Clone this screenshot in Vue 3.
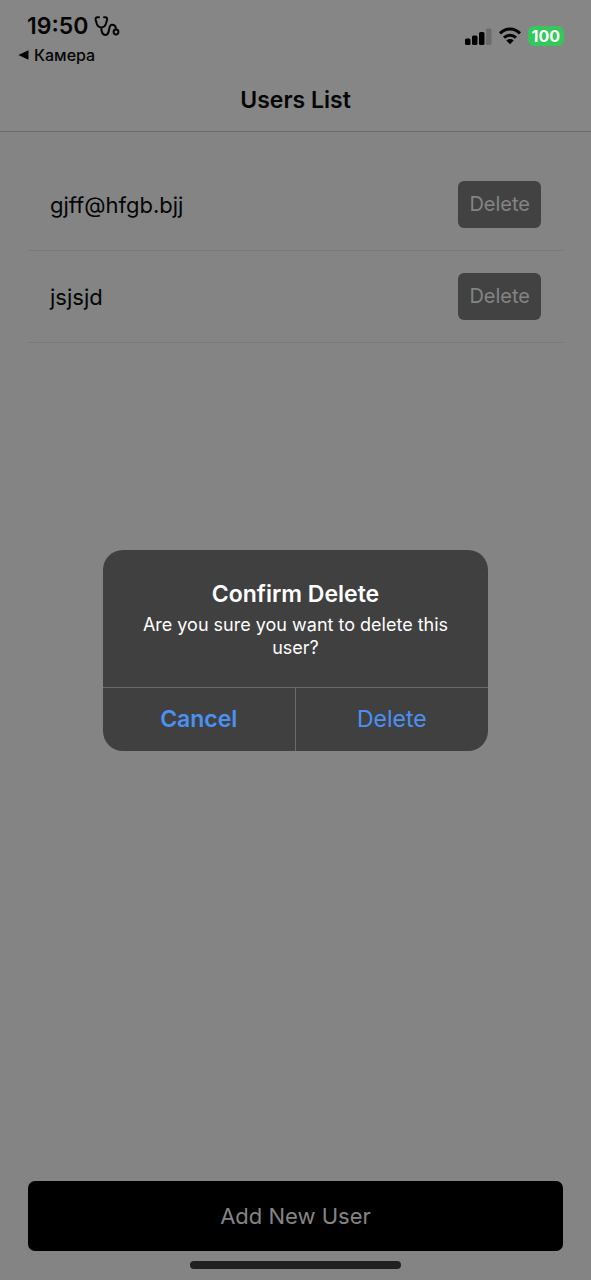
<script setup>
import { ref } from 'vue'

const users = ref(['gjff@hfgb.bjj', 'jsjsjd'])
const pending = ref(0)

function confirmDelete() {
  users.value.splice(pending.value, 1)
  pending.value = null
}
</script>

<template>
  <div class="screen">
    <div class="status">
      <div class="status-left">
        <div class="clock">
          <span class="time">19:50</span>
          <svg class="stethoscope" width="26" height="22" viewBox="0 0 26 22" aria-hidden="true">
            <path d="M5 2.200H3.600C2 2.200 1.300 3.200 1.700 4.900L2.800 8.800c.8 2.400 2.300 3.700 4.500 3.700s3.800-1.300 4.600-3.700L13 4.900C13.400 3.200 12.700 2.200 11.200 2.200H10M7.300 12.500C7.300 17.500 8.900 20 11.400 20C17 20 13.300 9.700 18 9.700c3 0 4 1.900 4 4.800" />
            <circle cx="22" cy="17" r="2.400" />
          </svg>
        </div>
        <a class="back" href="#">
          <svg width="11" height="10" viewBox="0 0 11 10" aria-hidden="true"><path d="M10.500.3v9.400L.4 5z" /></svg>
          Камера
        </a>
      </div>
      <div class="status-right">
        <svg width="27" height="17" viewBox="0 0 27 17" aria-hidden="true">
          <rect x="0" y="10.500" width="5.500" height="6.500" rx="1.500" />
          <rect x="7" y="7.500" width="5.500" height="9.500" rx="1.500" />
          <rect x="14" y="4" width="5.500" height="13" rx="1.500" />
          <rect class="faint" x="21" y="0.500" width="5.500" height="16.500" rx="1.500" />
        </svg>
        <svg class="wifi" width="24" height="18" viewBox="0 0 24 18" aria-hidden="true">
          <path d="M2 6.400C7.800.6 16.200.6 22 6.400M6 10.700c3.500-3.300 8.500-3.300 12 0" />
          <path class="dot" d="M8.300 13.400c2.200-1.900 5.200-1.900 7.400 0L12 17.200z" />
        </svg>
        <span class="battery">100</span>
      </div>
    </div>

    <header class="header"><h1>Users List</h1></header>

    <ul class="users">
      <li v-for="(user, i) in users" :key="user">
        <span>{{ user }}</span>
        <button type="button" class="remove" @click="pending = i">Delete</button>
      </li>
    </ul>

    <footer class="footer">
      <button type="button" class="add">Add New User</button>
      <div class="home"></div>
    </footer>

    <div v-if="pending !== null" class="overlay">
      <section class="dialog" role="alertdialog" aria-labelledby="dialog-title" aria-describedby="dialog-text">
        <div class="message">
          <h2 id="dialog-title">Confirm Delete</h2>
          <p id="dialog-text">Are you sure you want to delete this user?</p>
        </div>
        <div class="actions">
          <button type="button" class="cancel" @click="pending = null">Cancel</button>
          <button type="button" @click="confirmDelete">Delete</button>
        </div>
      </section>
    </div>
  </div>
</template>

<style>
body {
  margin: 0;
  background: #848484;
}
</style>

<style scoped>
.screen {
  box-sizing: border-box;
  position: relative;
  display: flex;
  flex-direction: column;
  min-height: 100vh;
  background: #848484;
  color: #050505;
  font-family: Inter, "Liberation Sans", sans-serif;
}
.screen * {
  box-sizing: border-box;
}
button {
  margin: 0;
  padding: 0;
  border: 0;
  background: none;
  font: inherit;
  cursor: pointer;
}
h1, h2, p, ul {
  margin: 0;
  padding: 0;
}
.status {
  display: flex;
  justify-content: space-between;
  height: 68px;
  padding: 12px 27px 0 18px;
  background: #868686;
}
.clock {
  display: flex;
  align-items: center;
  gap: 6px;
  height: 28px;
  padding-left: 9px;
}
.time {
  font-size: 23px;
  font-weight: 600;
  line-height: 28px;
}
.stethoscope {
  fill: none;
  stroke: #050505;
  stroke-width: 2;
  stroke-linecap: round;
}
.back {
  display: flex;
  align-items: center;
  gap: 5px;
  color: #050505;
  font-size: 16px;
  font-weight: 500;
  line-height: 30px;
  text-decoration: none;
}
.status-right {
  display: flex;
  align-items: center;
  gap: 6px;
  height: 48px;
}
.faint {
  fill: #6b6b6b;
}
.wifi {
  fill: none;
  stroke: #050505;
  stroke-width: 3;
}
.dot {
  fill: #050505;
  stroke: none;
}
.battery {
  padding: 0 4px;
  border-radius: 6px;
  background: #34c759;
  color: #fff;
  font-size: 16px;
  font-weight: 700;
  line-height: 20px;
}
.header {
  height: 64px;
  border-bottom: 1px solid #6c6c6c;
  background: #868686;
  text-align: center;
}
h1 {
  font-size: 23px;
  font-weight: 600;
  line-height: 64px;
}
.users {
  flex: 1;
  padding: 27px 28px 0;
  list-style: none;
}
.users li {
  display: flex;
  align-items: center;
  justify-content: space-between;
  padding: 22px;
  border-bottom: 1px solid #797979;
  font-size: 22px;
}
.remove {
  padding: 0 11px;
  border-radius: 6px;
  background: #424242;
  color: #848484;
  font-size: 20px;
  line-height: 47px;
}
.footer {
  padding: 0 28px 11px;
}
.add {
  display: block;
  width: 100%;
  padding-top: 1px;
  border-radius: 7px;
  background: #000;
  color: #848484;
  font-size: 22px;
  line-height: 69px;
}
.home {
  width: 211px;
  height: 8px;
  margin: 10px auto 0;
  border-radius: 4px;
  background: #202020;
}
.overlay {
  position: absolute;
  inset: 0;
  display: grid;
  place-items: center;
  padding-top: 20px;
}
.dialog {
  overflow: hidden;
  width: 385px;
  max-width: 90%;
  border-radius: 20px;
  background: #404040;
  color: #fff;
  text-align: center;
}
.message {
  padding: 28px 24px;
}
h2 {
  font-size: 23px;
  font-weight: 600;
  line-height: 32px;
}
p {
  margin-top: 3px;
  font-size: 18px;
  line-height: 23px;
}
.actions {
  display: grid;
  grid-template-columns: 1fr 1fr;
  border-top: 1px solid #6a6a6a;
}
.actions button {
  color: #4b90f5;
  font-size: 23px;
  line-height: 63px;
}
.actions .cancel {
  border-right: 1px solid #6a6a6a;
  font-weight: 600;
}
</style>
